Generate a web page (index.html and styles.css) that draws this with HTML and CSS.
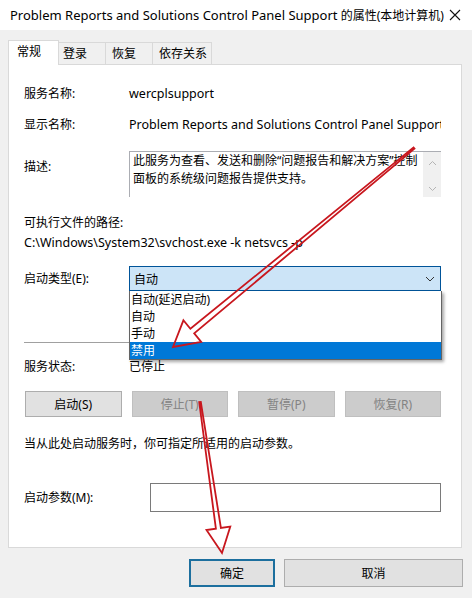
FILE: index.html
```html
<!DOCTYPE html>
<html lang="zh-CN">
<head>
<meta charset="utf-8">
<title>属性</title>
<link rel="stylesheet" href="styles.css">
</head>
<body>
<div class="window">
  <div class="titlebar">
    <span class="title"><span class="latin-t">Problem Reports and Solutions Control Panel Support</span> 的属性(本地计算机)</span>
    <svg class="close" width="12" height="12" viewBox="0 0 12 12"><path d="M1 1 L11 11 M11 1 L1 11" stroke="#111" stroke-width="1.1" fill="none"/></svg>
  </div>
  <div class="content">
    <div class="tabs">
      <div class="tab active">常规</div>
      <div class="tab">登录</div>
      <div class="tab">恢复</div>
      <div class="tab">依存关系</div>
    </div>
    <div class="panel">
      <div class="row r1"><span class="label">服务名称:</span><span class="value latin">wercplsupport</span></div>
      <div class="row r2"><span class="label">显示名称:</span><span class="value latin clip">Problem Reports and Solutions Control Panel Support</span></div>
      <div class="row desc-row">
        <span class="label desc-label">描述:</span>
        <div class="desc-box">
          <div class="desc-text">此服务为查看、发送和删除“问题报告和解决方案”控制面板的系统级问题报告提供支持。</div>
          <div class="scrollbar">
            <svg width="9" height="6" viewBox="0 0 9 6"><path d="M1 5 L4.5 1.5 L8 5" stroke="#b4b4b4" stroke-width="1" fill="none"/></svg>
            <svg width="9" height="6" viewBox="0 0 9 6"><path d="M1 1 L4.5 4.5 L8 1" stroke="#b4b4b4" stroke-width="1" fill="none"/></svg>
          </div>
        </div>
      </div>
      <div class="line path-label">可执行文件的路径:</div>
      <div class="line path-value latin">C:\Windows\System32\svchost.exe -k netsvcs -p</div>
      <div class="row combo-row">
        <span class="label">启动类型(E):</span>
        <div class="combo-wrap">
          <div class="combo">
            <span>自动</span>
            <svg width="10" height="6" viewBox="0 0 10 6"><path d="M1 1 L5 5 L9 1" stroke="#333" stroke-width="1" fill="none"/></svg>
          </div>
          <ul class="dropdown">
            <li>自动(延迟启动)</li>
            <li>自动</li>
            <li>手动</li>
            <li class="selected">禁用</li>
          </ul>
        </div>
      </div>
      <div class="separator"></div>
      <div class="row status-row"><span class="label">服务状态:</span><span class="value">已停止</span></div>
      <div class="btn-row">
        <button class="btn">启动(S)</button>
        <button class="btn disabled">停止(T)</button>
        <button class="btn disabled">暂停(P)</button>
        <button class="btn disabled">恢复(R)</button>
      </div>
      <div class="line help">当从此处启动服务时，你可指定所适用的启动参数。</div>
      <div class="row param-row"><span class="label">启动参数(M):</span><div class="param-input"></div></div>
    </div>
    <div class="footer">
      <button class="btn default">确定</button>
      <button class="btn cancel">取消</button>
    </div>
  </div>
  <svg class="arrows" width="472" height="598" viewBox="0 0 472 598">
    <polygon points="414.5,148.6 194.2,333.4 201.2,341.9 173,347 183.4,320.3 190.4,328.8 413.5,147.4" fill="none" stroke="#c8171e" stroke-width="1.8" stroke-linejoin="miter"/>
    <polygon points="200.8,401.9 220.9,527.9 230.3,526.6 222,553 206.5,530 215.9,528.7 199.2,402.1" fill="none" stroke="#c8171e" stroke-width="1.8" stroke-linejoin="miter"/>
  </svg>
</div>
</body>
</html>
```
FILE: styles.css
```css
* { box-sizing: border-box; }
html, body { margin: 0; padding: 0; }
body {
  width: 472px;
  height: 598px;
  overflow: hidden;
  background: #f0f0f0;
  font-family: "Noto Sans", "Noto Sans CJK SC", sans-serif;
  font-size: 12px;
  color: #000;
}
.window { position: relative; width: 472px; height: 598px; }
.titlebar {
  height: 30px;
  background: #fff;
  display: flex;
  align-items: center;
  padding-left: 10px;
}
.title { font-size: 12px; white-space: nowrap; flex: 1; }
.latin-t { font-size: 13px; }
.close { margin-right: 11px; }

.content { padding: 10px 0 0 8px; }
.tabs { display: flex; align-items: flex-end; height: 24px; }
.tab {
  height: 22px;
  line-height: 21px;
  padding: 0;
  border: 1px solid #d9d9d9;
  border-bottom: none;
  border-left: none;
  background: #f0f0f0;
  font-size: 12px;
  white-space: nowrap;
}
.tab.active {
  height: 25px;
  line-height: 22px;
  margin-bottom: -1px;
  background: #fff;
  border-left: 1px solid #d9d9d9;
  width: 51px;
  padding-left: 8px;
  position: relative;
  z-index: 1;
}
.tab:nth-child(2) { width: 47px; padding-left: 4px; }
.tab:nth-child(3) { width: 47px; padding-left: 6px; }
.tab:nth-child(4) { width: 59px; padding-left: 6px; }

.panel {
  width: 454px;
  height: 484px;
  background: #fff;
  border: 1px solid #d9d9d9;
  padding: 19px 20px 0 15px;
}
.row { display: grid; grid-template-columns: 105px 1fr; align-items: center; }
.label, .value, .line { white-space: nowrap; line-height: 20px; }
.latin { font-size: 12.5px; }
.clip { overflow: hidden; }
.r1 { height: 20px; }
.r2 { height: 20px; margin-top: 11px; }
.desc-row { margin-top: 16px; align-items: start; }
.desc-label { padding-top: 6px; }
.desc-box {
  height: 46px;
  border-top: 1px solid #abadb3;
  border-left: 1px solid #abadb3;
  display: flex;
}
.desc-text {
  flex: 1;
  padding: 0 0 0 3px;
  line-height: 18px;
  font-size: 12px;
}
.scrollbar {
  width: 18px;
  background: #f0f0f0;
  display: flex;
  flex-direction: column;
  justify-content: space-between;
  align-items: center;
  padding: 8px 0 5px;
}
.scrollbar svg { display: block; }
.path-label { margin-top: 16px; }
.combo-row { margin-top: 13px; height: 25px; }
.combo-wrap { position: relative; }
.combo {
  height: 25px;
  background: #cce4f7;
  border: 1px solid #005499;
  display: flex;
  align-items: center;
  justify-content: space-between;
  padding: 0 5px 0 4px;
}
.dropdown {
  position: absolute;
  left: 0;
  top: 25px;
  width: 313px;
  margin: 0;
  padding: 0;
  list-style: none;
  background: #fff;
  border: 1px solid #646464;
  border-top: none;
  box-shadow: 2px 2px 3px rgba(0,0,0,0.35);
  z-index: 5;
}
.dropdown li { height: 17px; line-height: 17px; padding-left: 1px; }
.dropdown li.selected { background: #0078d7; color: #fff; }
.separator { height: 1px; background: #a0a0a0; margin-top: 51px; }
.status-row { margin-top: 14px; height: 20px; }
.btn-row {
  display: grid;
  grid-template-columns: repeat(4, 1fr);
  column-gap: 10px;
  margin: 14px 0 0 1px;
  width: 416px;
}
.btn {
  height: 26px;
  font-family: inherit;
  font-size: 12px;
  color: #000;
  background: #e1e1e1;
  border: 1px solid #adadad;
  padding: 0;
}
.btn.disabled { background: #cccccc; border-color: #bfbfbf; color: #838383; }
.help { margin-top: 17px; }
.param-row { grid-template-columns: 126px 1fr; margin-top: 29px; height: 29px; }
.param-input { height: 29px; border: 1px solid #7a7a7a; background: #fff; }

.footer { display: flex; gap: 9px; margin-top: 11px; padding-left: 181px; }
.footer .btn { height: 28px; }
.btn.default { width: 86px; border: 2px solid #1c6f9e; background: #e1e1e1; }
.btn.cancel { width: 179px; }

.arrows { position: absolute; left: 0; top: 0; pointer-events: none; z-index: 10; }
```
